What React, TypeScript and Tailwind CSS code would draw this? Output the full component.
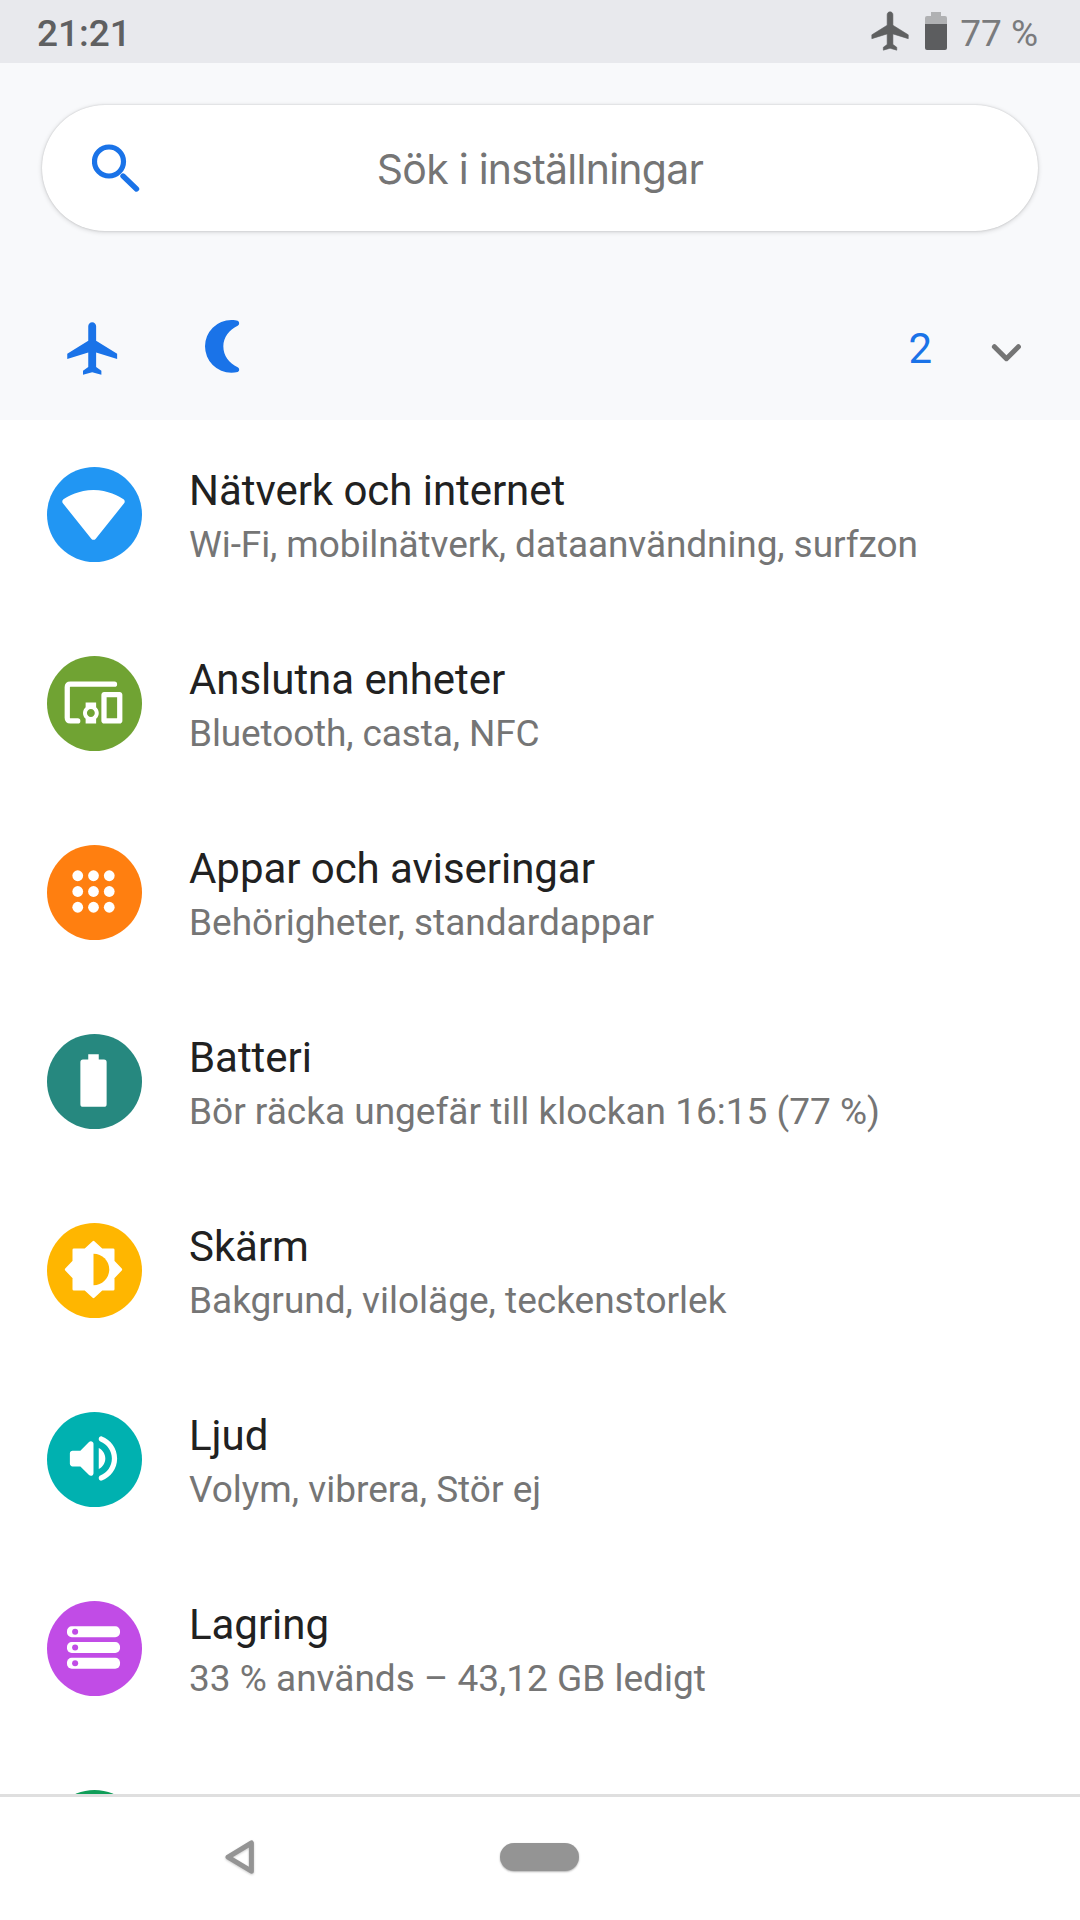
import type { ReactNode } from "react";

const PLANE =
  "M21 16v-2l-8-5V3.5c0-.83-.67-1.5-1.5-1.5S10 2.67 10 3.5V9l-8 5v2l8-2.5V19l-2 1.5V22l3.5-1 3.5 1v-1.5L13 19v-5.5l8 2.5z";

function WifiIcon() {
  return (
    <path d="M23.66 8.11c.39-.48.29-1.19-.22-1.54C21.67 5.36 17.55 3 12 3 6.44 3 2.33 5.36.56 6.57c-.51.35-.61 1.06-.22 1.54l10.89 13.56c.4.5 1.16.5 1.55.01L23.66 8.11z" />
  );
}

function DevicesIcon() {
  return (
    <>
      <path d="M20 5H3.2Q2 5 2 6.2V17.8Q2 19 3.2 19H6" fill="none" stroke="currentColor" strokeWidth="2" strokeLinecap="round" />
      <path
        fillRule="evenodd"
        d="M13 12H9v1.78c-.61.55-1 1.33-1 2.22s.39 1.67 1 2.22V20h4v-1.78c.61-.55 1-1.34 1-2.22s-.39-1.67-1-2.22V12zm-2 5.5c-.83 0-1.5-.67-1.5-1.5s.67-1.5 1.5-1.5 1.5.67 1.5 1.5-.67 1.5-1.5 1.5zM22 8h-6c-.5 0-1 .5-1 1v10c0 .5.5 1 1 1h6c.5 0 1-.5 1-1V9c0-.5-.5-1-1-1zm-1 10h-4v-8h4v8z"
      />
    </>
  );
}

function AppsIcon() {
  return (
    <>
      {[6, 12, 18].map((y) => [6, 12, 18].map((x) => <circle key={`${x}-${y}`} cx={x} cy={y} r="2.05" />))}
    </>
  );
}

function BatteryIcon() {
  return (
    <path d="M16 4H14V2h-4v2H8Q7 4 7 5V21Q7 22 8 22H16Q17 22 17 21V5Q17 4 16 4z" />
  );
}

function DisplayIcon() {
  return (
    <>
      <path
        d="M19.5 15.1L22.4 12 19.5 8.9V4.5H15.1L12 1.6 8.9 4.5H4.5V8.9L1.6 12 4.5 15.1V19.5H8.9L12 22.4 15.1 19.5H19.5z"
        stroke="currentColor"
        strokeWidth="1"
        strokeLinejoin="round"
      />
      <path d="M12 18V6c3.31 0 6 2.69 6 6s-2.69 6-6 6z" fill="#ffb600" />
    </>
  );
}

function SoundIcon() {
  return (
    <path d="M3 10v4c0 .55.45 1 1 1h3l3.29 3.29c.63.63 1.71.18 1.71-.71V6.41c0-.89-1.08-1.34-1.71-.71L7 9H4c-.55 0-1 .45-1 1zm13.5 2c0-1.77-1.02-3.29-2.5-4.03v8.05c1.48-.73 2.5-2.25 2.5-4.02zM14 4.45v.2c0 .38.25.71.6.85C17.18 6.53 19 9.06 19 12s-1.82 5.47-4.4 6.5c-.36.14-.6.47-.6.85v.2c0 .63.63 1.07 1.21.85C18.6 19.11 21 15.84 21 12s-2.4-7.11-5.79-8.4c-.58-.23-1.21.22-1.21.85z" />
  );
}

function StorageIcon() {
  return (
    <>
      {[6, 12, 18].map((y) => (
        <g key={y}>
          <rect x="1.9" y={y - 2.05} width="20.2" height="4.1" rx="1.8" />
          <circle cx="5" cy={y} r="1.15" fill="#c14ce6" />
        </g>
      ))}
    </>
  );
}

type Item = { title: string; summary: string; color: string; icon: ReactNode; tracking?: string };

const ITEMS: Item[] = [
  {
    title: "Nätverk och internet",
    summary: "Wi-Fi, mobilnätverk, dataanvändning, surfzon",
    color: "bg-[#2196f3]",
    icon: <WifiIcon />,
    tracking: "tracking-[-0.09px]",
  },
  { title: "Anslutna enheter", summary: "Bluetooth, casta, NFC", color: "bg-[#70a333]", icon: <DevicesIcon />, tracking: "tracking-[-0.13px]" },
  { title: "Appar och aviseringar", summary: "Behörigheter, standardappar", color: "bg-[#ff7f10]", icon: <AppsIcon /> },
  { title: "Batteri", summary: "Bör räcka ungefär till klockan 16:15 (77 %)", color: "bg-[#26887f]", icon: <BatteryIcon /> },
  { title: "Skärm", summary: "Bakgrund, viloläge, teckenstorlek", color: "bg-[#ffb600]", icon: <DisplayIcon /> },
  { title: "Ljud", summary: "Volym, vibrera, Stör ej", color: "bg-[#00b1b0]", icon: <SoundIcon /> },
  { title: "Lagring", summary: "33 % används – 43,12 GB ledigt", color: "bg-[#c14ce6]", icon: <StorageIcon /> },
];

function StatusBar() {
  return (
    <div className="flex h-[63px] shrink-0 items-start justify-between bg-[#e8e9ed] pr-[42px] pl-[37px] text-[#5f6061]">
      <span className="pt-[11px] text-[37px] leading-[46px] font-medium">21:21</span>
      <div className="flex items-start">
        <svg viewBox="0 0 24 24" className="mt-[8px] mr-[11px] size-[46px]" fill="currentColor">
          <path d={PLANE} stroke="currentColor" strokeWidth="0.3" strokeLinejoin="round" />
        </svg>
        <svg viewBox="0 0 22 38" className="mt-[12px] mr-[13px] h-[38px] w-[22px]">
          <path d="M6 0h10v4h4q2 0 2 2v6H0V6q0-2 2-2h4z" fill="#b0b1b3" />
          <path d="M0 12h22v24q0 2-2 2H2q-2 0-2-2z" fill="#5c5d5f" />
        </svg>
        <span className="pt-[11px] text-[37px] leading-[46px] text-[#7a7b7d]">77 %</span>
      </div>
    </div>
  );
}

function Header() {
  return (
    <header className="h-[357px] shrink-0 bg-[#f8f9fb] px-[42px] pt-[42px]">
      <div className="grid h-[126px] grid-cols-[140px_1fr_140px] items-center rounded-full bg-white shadow-[0_1px_5px_rgba(0,0,0,0.16),0_0_2px_rgba(0,0,0,0.16)]">
        <svg viewBox="0 0 48 48" className="ml-[50px] size-[48px]" fill="none" stroke="#1a73e8">
          <circle cx="17" cy="17.5" r="14.5" strokeWidth="5.2" />
          <path d="M31 32L44.5 45" strokeWidth="5.4" strokeLinecap="round" />
        </svg>
        <span className="pt-[1px] text-center font-['Inter',sans-serif] text-[41px] leading-[50px] tracking-[-0.75px] text-[#757575]">
          Sök i inställningar
        </span>
      </div>
      <div className="flex items-start pt-[86px]">
        <svg viewBox="0 0 24 24" className="ml-[20px] size-[63px]" fill="#1a73e8">
          <path d={PLANE} />
        </svg>
        <svg viewBox="614 120 105 159" className="mt-[3px] ml-[80px] h-[53px] w-[35px]" fill="#1a73e8">
          <path d="M693 120C702 120 708 121 712 122C718 125 718 134 712 137C686 149 669 172 669 199C669 227 686 250 712 262C718 265 718 274 712 276C706 277 700 278 693 278A79 79 0 0 1 693 120Z" />
        </svg>
        <span className="mt-[7px] ml-auto text-[42px] leading-[50px] text-[#1a73e8]">2</span>
        <svg viewBox="0 0 30 20" className="mt-[26px] mr-[17px] ml-[59px] h-[20px] w-[30px]" fill="none" stroke="#757575" strokeWidth="5" strokeLinecap="round" strokeLinejoin="round">
          <path d="M3.4 3.7L15.4 15.7L27.4 3.7" />
        </svg>
      </div>
    </header>
  );
}

function Row({ title, summary, color, icon, tracking = "" }: Item) {
  return (
    <li className="flex h-[189px] shrink-0 items-start pl-[47px]">
      <div className={`mt-[47px] size-[95px] shrink-0 rounded-full p-[15px] text-white ${color}`}>
        <svg viewBox="0 0 24 24" className="size-[63px]" fill="currentColor">
          {icon}
        </svg>
      </div>
      <div className="ml-[47px] pt-[46px] whitespace-nowrap">
        <div className="text-[42px] leading-[50px] tracking-[-0.05px] text-[#212121]">{title}</div>
        <div className={`mt-[7px] text-[37px] leading-[44px] text-[#757575] ${tracking}`}>{summary}</div>
      </div>
    </li>
  );
}

function NavBar() {
  return (
    <nav className="flex h-[126px] shrink-0 border-t-[3px] border-[#dfdfdf] bg-white">
      <svg viewBox="0 0 30 42" className="mt-[40px] ml-[225px] h-[42px] w-[30px] drop-shadow-[0_1px_1px_rgba(0,0,0,0.2)]" fill="none" stroke="#949494" strokeWidth="5" strokeLinejoin="round">
        <path d="M26.4 6V34.2L3 20.1z" />
      </svg>
      <div className="mt-[46px] ml-[245px] h-[28px] w-[79px] rounded-full bg-[#949494] shadow-[0_1px_2px_rgba(0,0,0,0.3)]" />
    </nav>
  );
}

export default function App() {
  return (
    <div className="flex h-[1920px] w-[1080px] flex-col overflow-hidden bg-white font-['Roboto',sans-serif]">
      <StatusBar />
      <Header />
      <ul className="flex min-h-0 flex-1 flex-col overflow-hidden">
        {ITEMS.map((item) => (
          <Row key={item.title} {...item} />
        ))}
        <li className="shrink-0 pt-[47px] pl-[47px]">
          <div className="size-[95px] rounded-full bg-[#0f9d58]" />
        </li>
      </ul>
      <NavBar />
    </div>
  );
}
